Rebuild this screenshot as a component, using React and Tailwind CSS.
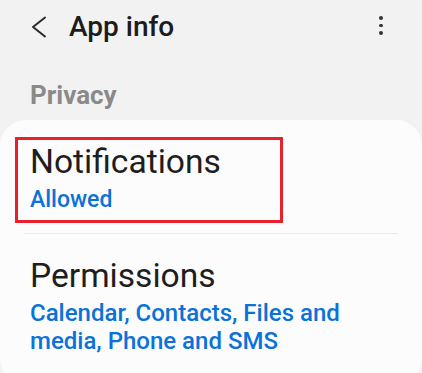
import React from "react";

export default function App() {
  return (
    <div
      className="w-[422px] h-[373px] overflow-hidden bg-[#f2f2f2] relative"
      style={{ fontFamily: "Roboto, 'Noto Sans', sans-serif" }}
    >
      {/* Header */}
      <div className="h-[54px] flex items-center relative">
        <svg
          className="ml-[31px]"
          width="16"
          height="22"
          viewBox="0 0 16 22"
          fill="none"
        >
          <path
            d="M14 1.5 L2 11 L14 20.5"
            stroke="#2a2a2a"
            strokeWidth="2"
            strokeLinecap="round"
            strokeLinejoin="round"
          />
        </svg>
        <div className="ml-[22px] text-[28px] leading-[54px] text-[#1c1c1c] font-medium">
          App info
        </div>
        <div className="absolute left-[379px] top-[16px] flex flex-col gap-[4px]">
          <span className="block w-[3.5px] h-[3.5px] rounded-full bg-[#333]" />
          <span className="block w-[3.5px] h-[3.5px] rounded-full bg-[#333]" />
          <span className="block w-[3.5px] h-[3.5px] rounded-full bg-[#333]" />
        </div>
      </div>

      {/* Section label */}
      <div className="mt-[26px] pl-[30px] text-[26px] leading-[30px] font-bold text-[#8a8a8a]">
        Privacy
      </div>

      {/* Card */}
      <div className="mt-[10px] bg-[#fcfcfc] rounded-[26px] pt-[22px] pb-[30px] relative">
        <div className="px-[30px]">
          <div className="text-[33.6px] leading-[40px] text-[#1e1e1e]">
            Notifications
          </div>
          <div className="mt-[3px] text-[23px] leading-[30px] font-medium text-[#0a72d8]">
            Allowed
          </div>
        </div>
        <div className="mt-[18px] mx-[24px] h-px bg-[#ebebeb]" />
        <div className="px-[30px] pt-[22px]">
          <div className="text-[33.6px] leading-[40px] text-[#1e1e1e]">
            Permissions
          </div>
          <div className="mt-[3px] pr-[10px] text-[24px] leading-[28px] font-medium text-[#0a72d8]">
            Calendar, Contacts, Files and media, Phone and SMS
          </div>
        </div>

        {/* Annotation box */}
        <div className="absolute left-[15px] top-[17px] w-[268px] h-[86px] border-[3px] border-[#e8202a]" />
      </div>
    </div>
  );
}
